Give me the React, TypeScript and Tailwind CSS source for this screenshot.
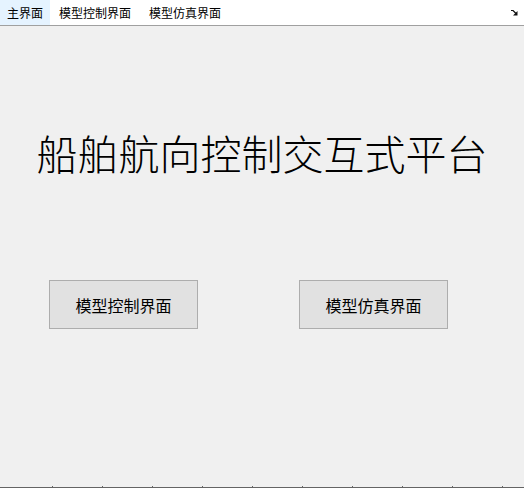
import React from "react";

const cjk = '"Noto Sans CJK SC", "Noto Sans", sans-serif';

const tabs = ["主界面", "模型控制界面", "模型仿真界面"];

export default function App() {
  return (
    <div
      className="w-[524px] h-[488px] flex flex-col bg-[#f0f0f0] text-black overflow-hidden"
      style={{ fontFamily: cjk }}
    >
      {/* menu strip */}
      <div className="h-[26px] shrink-0 bg-white border-b border-[#a0a0a0] flex items-stretch">
        {tabs.map((t, i) => (
          <div
            key={t}
            className={
              i === 0
                ? "h-[25px] px-[7px] flex items-center text-[12px] bg-[#e5f3ff]"
                : i === 1
                ? "h-[25px] ml-[2px] px-[7px] flex items-center text-[12px]"
                : "h-[25px] ml-[4px] px-[7px] flex items-center text-[12px]"
            }
          >
            {t}
          </div>
        ))}
        <div className="ml-auto mr-[6px] flex items-center">
          <svg width="7" height="6" viewBox="0 0 7 6">
            <path d="M0 0.5 L2 0.5 L5 3.5" stroke="#111" strokeWidth="1.2" fill="none" />
            <path d="M6.5 1 L6.5 5.5 L2 5.5 Z" fill="#111" />
          </svg>
        </div>
      </div>

      {/* body */}
      <div className="flex-1 flex flex-col">
        <div className="pt-[105px] text-center text-[41px] leading-[42px] font-light">
          船舶航向控制交互式平台
        </div>
        <div className="mt-[107px] pl-[49px] flex gap-[101px]">
          <button className="w-[149px] h-[49px] border border-[#adadad] bg-[#e1e1e1] text-[16px] flex items-center justify-center">
            模型控制界面
          </button>
          <button className="w-[149px] h-[49px] border border-[#adadad] bg-[#e1e1e1] text-[16px] flex items-center justify-center">
            模型仿真界面
          </button>
        </div>
      </div>

      {/* bottom edge with ticks */}
      <div className="shrink-0 h-[2px] flex flex-col">
        <div className="h-[1px] flex pl-[52px]">
          {Array.from({ length: 10 }).map((_, i) => (
            <div key={i} className="w-[50px] h-[1px] shrink-0 flex">
              <div className="w-[1px] h-[1px] bg-[#646464]" />
            </div>
          ))}
        </div>
        <div className="h-[1px] bg-[#646464]" />
      </div>
    </div>
  );
}
